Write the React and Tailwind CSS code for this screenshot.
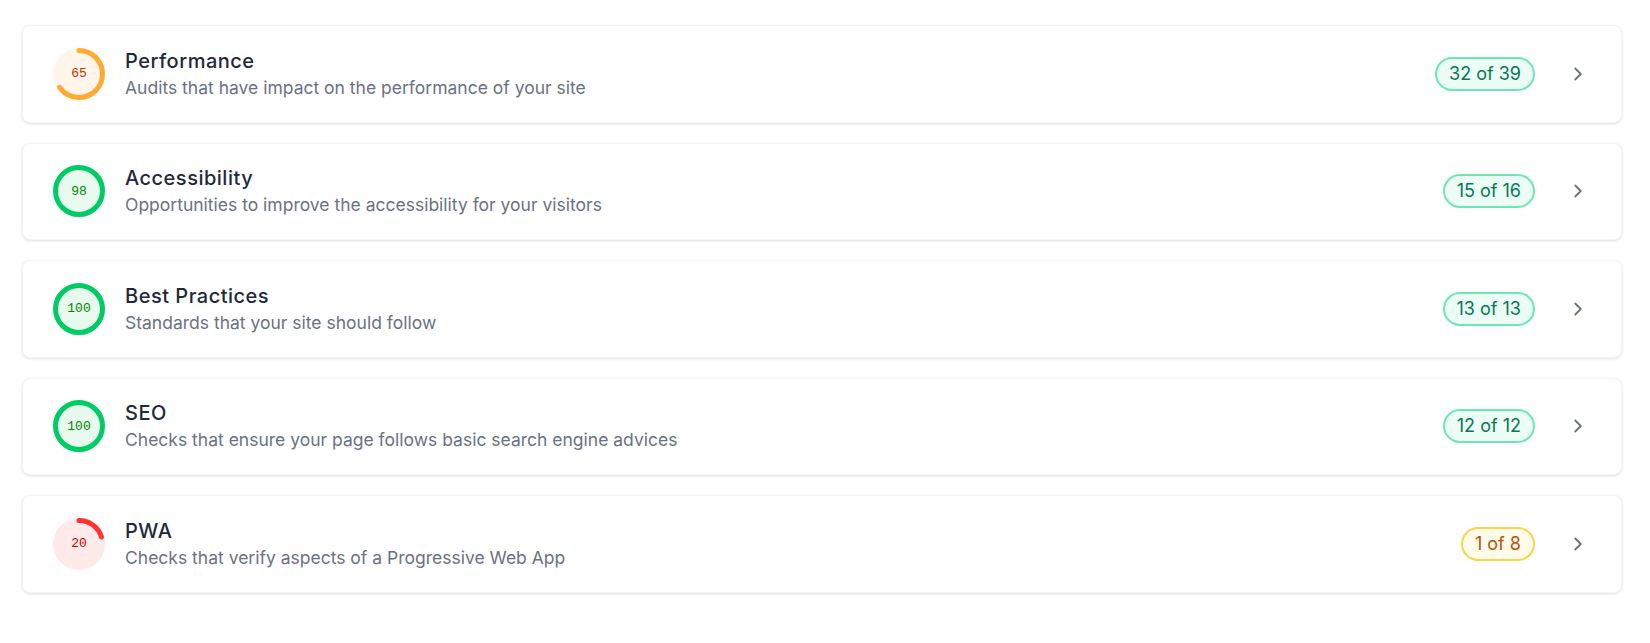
import React from 'react';
import { ChevronRight } from "lucide-react";

const categories = [
  { score: 65, title: "Performance", desc: "Audits that have impact on the performance of your site", passed: 32, total: 39 },
  { score: 98, title: "Accessibility", desc: "Opportunities to improve the accessibility for your visitors", passed: 15, total: 16 },
  { score: 100, title: "Best Practices", desc: "Standards that your site should follow", passed: 13, total: 13 },
  { score: 100, title: "SEO", desc: "Checks that ensure your page follows basic search engine advices", passed: 12, total: 12 },
  { score: 20, title: "PWA", desc: "Checks that verify aspects of a Progressive Web App", passed: 1, total: 8 },
];

const gaugeColors = (score) => {
  if (score >= 90) return { ring: "#00cc66", fill: "#e8f9ee", text: "text-[#008800]" };
  if (score >= 50) return { ring: "#ffaa33", fill: "#fff5ea", text: "text-[#c33300]" };
  return { ring: "#ff3333", fill: "#ffeaea", text: "text-[#cc0000]" };
};

function Gauge({ score }) {
  const c = gaugeColors(score);
  const r = 23.5;
  const circ = 2 * Math.PI * r;
  return (
    <div className="relative w-[52px] h-[52px] shrink-0">
      <svg width="52" height="52" viewBox="0 0 52 52" className="-rotate-90">
        <circle cx="26" cy="26" r="26" fill={c.fill} />
        <circle
          cx="26"
          cy="26"
          r={r}
          fill="none"
          stroke={c.ring}
          strokeWidth="5"
          strokeLinecap={score >= 100 ? "butt" : "round"}
          strokeDasharray={`${(score / 100) * circ} ${circ}`}
        />
      </svg>
      <span className={`absolute inset-0 flex items-center justify-center text-[13px] font-['Liberation_Mono',monospace] ${c.text}`}>
        {score}
      </span>
    </div>
  );
}

function Badge({ passed, total }) {
  const good = passed / total >= 0.5;
  return (
    <span
      className={
        good
          ? "h-[34px] px-3 flex items-center rounded-full border-2 border-[#6ee7b7] bg-[#ecfdf5] text-[#047857] text-lg"
          : "h-[34px] px-3 flex items-center rounded-full border-2 border-[#fcd34d] bg-[#fffbeb] text-[#b45309] text-lg"
      }
    >
      {passed} of {total}
    </span>
  );
}

export default function App() {
  return (
    <div className="min-h-screen bg-white pt-[25px] pl-[22px] pr-[28px] font-['Inter',sans-serif]">
      <div className="flex flex-col gap-5">
        {categories.map((cat) => (
          <div
            key={cat.title}
            className="h-[97.5px] flex items-center pl-[30px] pr-[32px] bg-white rounded-lg border border-gray-100 shadow-[0_1px_3px_rgba(0,0,0,0.12)]"
          >
            <Gauge score={cat.score} />
            <div className="ml-5 flex flex-col flex-1">
              <span className="relative top-[1px] text-[20px] font-medium tracking-[0.5px] text-gray-800 leading-7">{cat.title}</span>
              <span className="text-[17.5px] text-gray-500 leading-7">{cat.desc}</span>
            </div>
            <Badge passed={cat.passed} total={cat.total} />
            <ChevronRight className="ml-8 text-gray-500" size={22} strokeWidth={2} />
          </div>
        ))}
      </div>
    </div>
  );
}
